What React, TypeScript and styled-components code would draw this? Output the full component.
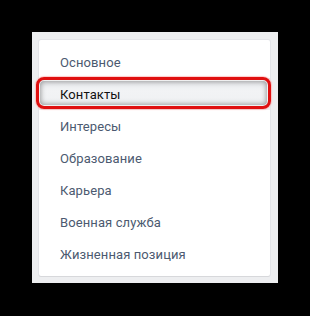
import styled, { createGlobalStyle, css } from "styled-components";

const GlobalStyle = createGlobalStyle`
    html, body {
        margin: 0;
        padding: 0;
        background: #000;
    }
    body {
        font-family: Roboto, "Open Sans", "Liberation Sans", sans-serif;
        -webkit-font-smoothing: antialiased;
    }
`;

const Screen = styled.div`
    width: 310px;
    height: 316px;
    background: #000;
    padding: 32px 32px 33px 32px;
    box-sizing: border-box;
`;

const Panel = styled.div`
    width: 246px;
    height: 251px;
    background: #edeef0;
    padding: 8px 8px 7px 7px;
    box-sizing: border-box;
`;

const Card = styled.ul`
    margin: 0;
    list-style: none;
    height: 100%;
    background: #fff;
    border-radius: 2px;
    box-shadow: 0 1px 0 0 #d7d8db, 0 0 0 1px #e3e4e8;
    padding: 6px 0;
    box-sizing: border-box;
`;

const MenuItem = styled.li<{ active?: boolean }>`
    position: relative;
    height: 32px;
    display: flex;
    align-items: center;
    padding-left: 21px;
    font-size: 13px;
    letter-spacing: 0.1px;
    color: #4c5a70;
    cursor: pointer;
    ${props => props.active && css`
        color: #111;
        background: linear-gradient(#e6e8ec, #f2f3f5 40%, #eef0f2);
        &::after {
            content: "";
            position: absolute;
            left: -3px;
            right: -1px;
            top: -1px;
            bottom: 1px;
            border: 3px solid #e01010;
            border-radius: 8px;
            box-shadow: 0 0 1px 1px rgba(255, 150, 150, 0.5),
                inset 0 0 0 1px rgba(255, 255, 255, 0.8),
                inset 0 0 5px 2px rgba(90, 90, 90, 0.55);
            pointer-events: none;
        }
    `}
`;

const items = [
    "Основное",
    "Контакты",
    "Интересы",
    "Образование",
    "Карьера",
    "Военная служба",
    "Жизненная позиция",
];

const App = () => {
    return (
        <Screen>
            <GlobalStyle />
            <Panel>
                <Card>
                    {items.map((item, i) => (
                        <MenuItem key={item} active={i === 1}>{item}</MenuItem>
                    ))}
                </Card>
            </Panel>
        </Screen>
    );
};

export default App;
